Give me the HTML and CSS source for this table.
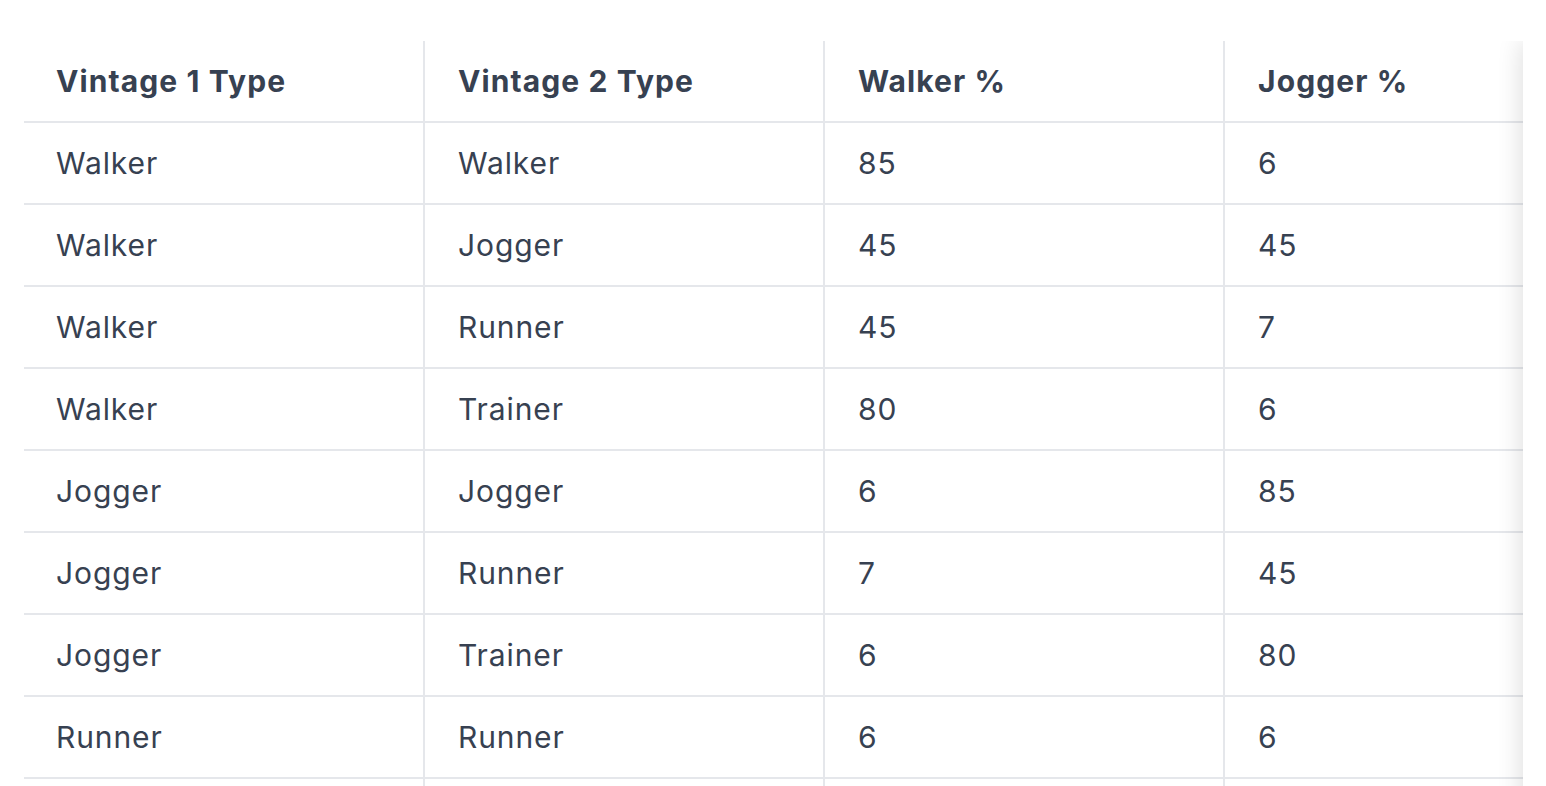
FILE: index.html
```html
<!DOCTYPE html>
<html lang="en">
<head>
<meta charset="utf-8">
<title>Vintage types</title>
<link rel="stylesheet" href="styles.css">
</head>
<body>
<div class="page">
  <div class="table-wrap">
    <table class="data-table">
      <thead>
        <tr>
          <th>Vintage 1 Type</th>
          <th>Vintage 2 Type</th>
          <th>Walker %</th>
          <th>Jogger %</th>
        </tr>
      </thead>
      <tbody>
        <tr><td>Walker</td><td>Walker</td><td>85</td><td>6</td></tr>
        <tr><td>Walker</td><td>Jogger</td><td>45</td><td>45</td></tr>
        <tr><td>Walker</td><td>Runner</td><td>45</td><td>7</td></tr>
        <tr><td>Walker</td><td>Trainer</td><td>80</td><td>6</td></tr>
        <tr><td>Jogger</td><td>Jogger</td><td>6</td><td>85</td></tr>
        <tr><td>Jogger</td><td>Runner</td><td>7</td><td>45</td></tr>
        <tr><td>Jogger</td><td>Trainer</td><td>6</td><td>80</td></tr>
        <tr><td>Runner</td><td>Runner</td><td>6</td><td>6</td></tr>
        <tr class="row-partial"><td></td><td></td><td></td><td></td></tr>
      </tbody>
    </table>
    <div class="scroll-shadow"></div>
  </div>
</div>
</body>
</html>
```

FILE: styles.css
```css
html, body {
  margin: 0;
  padding: 0;
  background: #ffffff;
}

body {
  font-family: "Inter", "Noto Sans", sans-serif;
  color: #374151;
  overflow: hidden;
}

.page {
  padding: 41px 23px 0 24px;
}

.table-wrap {
  position: relative;
  overflow: hidden;
  width: 1499px;
}

.data-table {
  border-collapse: collapse;
  table-layout: fixed;
  width: 1600px;
}

.data-table th,
.data-table td {
  width: 400px;
  box-sizing: border-box;
  height: 82px;
  padding: 0 32px 0 33px;
  text-align: left;
  vertical-align: middle;
  font-size: 30px;
  line-height: 40px;
  white-space: nowrap;
  border-left: 2px solid #e5e7eb;
  border-bottom: 2px solid #e5e7eb;
}

.data-table th {
  height: 81px;
  font-weight: 700;
  letter-spacing: 1.1px;
}

.data-table td {
  font-weight: 400;
  letter-spacing: 0.9px;
}

.data-table th:first-child,
.data-table td:first-child {
  border-left: none;
  padding-left: 32px;
}

.scroll-shadow {
  position: absolute;
  top: 0;
  bottom: 0;
  right: -20px;
  width: 20px;
  box-shadow: 0 0 26px rgba(0, 0, 0, 0.16);
  background: #fff;
}
```
